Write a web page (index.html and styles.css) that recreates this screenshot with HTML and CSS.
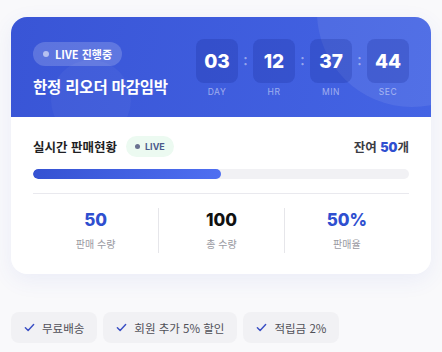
FILE: index.html
```html
<!DOCTYPE html>
<html lang="ko">
<head>
    <meta charset="UTF-8">
    <meta name="viewport" content="width=device-width, initial-scale=1.0">
    <title>한정 리오더</title>
    <link rel="stylesheet" href="styles.css">
</head>
<body>
    <div class="page">
        <div class="card">
            <div class="hero">
                <span class="blob blob-big"></span>
                <span class="blob blob-small"></span>
                <div class="hero-left">
                    <span class="live-pill"><i class="dot"></i>LIVE 진행중</span>
                    <h1>한정 리오더 마감임박</h1>
                </div>
                <div class="countdown">
                    <div class="unit">
                        <div class="box">03</div>
                        <span class="label">DAY</span>
                    </div>
                    <span class="colon">:</span>
                    <div class="unit">
                        <div class="box">12</div>
                        <span class="label">HR</span>
                    </div>
                    <span class="colon">:</span>
                    <div class="unit">
                        <div class="box">37</div>
                        <span class="label">MIN</span>
                    </div>
                    <span class="colon">:</span>
                    <div class="unit">
                        <div class="box">44</div>
                        <span class="label">SEC</span>
                    </div>
                </div>
            </div>

            <div class="content">
                <div class="status-row">
                    <div class="status-title">
                        <h2>실시간 판매현황</h2>
                        <span class="live-tag"><i class="dot"></i>LIVE</span>
                    </div>
                    <p class="remain">잔여 <strong>50</strong>개</p>
                </div>

                <div class="progress">
                    <div class="progress-fill" style="width: 50%"></div>
                </div>

                <div class="stats">
                    <div class="stat">
                        <strong class="accent">50</strong>
                        <span>판매 수량</span>
                    </div>
                    <div class="stat">
                        <strong>100</strong>
                        <span>총 수량</span>
                    </div>
                    <div class="stat">
                        <strong class="accent">50%</strong>
                        <span>판매율</span>
                    </div>
                </div>
            </div>
        </div>

        <div class="perks">
            <span class="perk"><svg viewBox="0 0 12 12"><path d="M1.5 6.3 L4.5 9.2 L10.5 2.8"/></svg>무료배송</span>
            <span class="perk"><svg viewBox="0 0 12 12"><path d="M1.5 6.3 L4.5 9.2 L10.5 2.8"/></svg>회원 추가 5% 할인</span>
            <span class="perk"><svg viewBox="0 0 12 12"><path d="M1.5 6.3 L4.5 9.2 L10.5 2.8"/></svg>적립금 2%</span>
        </div>
    </div>
</body>
</html>
```

FILE: styles.css
```css
* {
    margin: 0;
    padding: 0;
    box-sizing: border-box;
}

body {
    font-family: 'Noto Sans CJK KR', 'Noto Sans', sans-serif;
    background: #f9f9fb;
    color: #222;
}

.page {
    padding: 17px 11px;
}

.card {
    width: 420px;
    background: #fff;
    border-radius: 16px;
    overflow: hidden;
    box-shadow: 0 6px 22px rgba(70, 90, 200, 0.08);
}

/* header */
.hero {
    position: relative;
    overflow: hidden;
    height: 100px;
    padding: 0 22px;
    display: flex;
    align-items: center;
    justify-content: space-between;
    background: linear-gradient(100deg, #3955d6 0%, #4464e4 100%);
    color: #fff;
}

.blob {
    position: absolute;
    border-radius: 50%;
    background: rgba(255, 255, 255, 0.08);
}

.blob-big {
    width: 190px;
    height: 190px;
    top: -100px;
    right: -76px;
}

.blob-small {
    width: 80px;
    height: 80px;
    left: 40px;
    top: 43px;
    background: rgba(255, 255, 255, 0.04);
}

.hero-left {
    position: relative;
    display: flex;
    flex-direction: column;
    align-items: flex-start;
    gap: 9px;
    padding-top: 5px;
}

.live-pill {
    display: inline-flex;
    align-items: center;
    gap: 6px;
    height: 24px;
    padding: 0 10px;
    border-radius: 12px;
    background: rgba(255, 255, 255, 0.18);
    font-size: 11px;
    font-weight: 700;
}

.live-pill .dot {
    width: 6px;
    height: 6px;
    border-radius: 50%;
    background: rgba(255, 255, 255, 0.55);
}

h1 {
    font-size: 15.5px;
    font-weight: 700;
    letter-spacing: -0.2px;
}

.countdown {
    position: relative;
    display: flex;
    align-items: flex-start;
    gap: 4px;
    padding-top: 2px;
}

.unit {
    display: flex;
    flex-direction: column;
    align-items: center;
    gap: 4px;
}

.box {
    width: 42px;
    height: 44px;
    border-radius: 8px;
    background: rgba(20, 35, 140, 0.22);
    display: flex;
    align-items: center;
    justify-content: center;
    font-family: 'Inter', sans-serif;
    font-size: 19px;
    font-weight: 800;
}

.label {
    font-family: 'Inter', sans-serif;
    font-size: 8.5px;
    letter-spacing: 0.6px;
    color: rgba(255, 255, 255, 0.5);
}

.colon {
    width: 7px;
    line-height: 44px;
    text-align: center;
    font-size: 12px;
    font-weight: 700;
    color: rgba(255, 255, 255, 0.45);
}

/* body */
.content {
    padding: 19px 22px 21px;
}

.status-row {
    display: flex;
    align-items: center;
    justify-content: space-between;
}

.status-title {
    display: flex;
    align-items: center;
    gap: 9px;
}

h2 {
    font-size: 12.5px;
    font-weight: 700;
    color: #1f1f24;
}

.live-tag {
    display: inline-flex;
    align-items: center;
    gap: 5px;
    height: 21px;
    padding: 0 9px;
    border-radius: 11px;
    background: #ecfaf1;
    font-family: 'Inter', sans-serif;
    font-size: 9px;
    font-weight: 700;
    color: #4c5a8c;
}

.live-tag .dot {
    width: 5px;
    height: 5px;
    border-radius: 50%;
    background: #6a7190;
}

.remain {
    font-size: 12.5px;
    font-weight: 700;
    color: #3c3c44;
}

.remain strong {
    font-family: 'Inter', sans-serif;
    color: #2f4fd0;
}

.progress {
    margin-top: 12px;
    height: 10px;
    border-radius: 5px;
    background: #f1f1f4;
    overflow: hidden;
}

.progress-fill {
    height: 100%;
    border-radius: 5px;
    background: linear-gradient(90deg, #3552d2, #4f6ff1);
}

.stats {
    margin-top: 14px;
    padding-top: 14px;
    border-top: 1px solid #e9e9ee;
    display: grid;
    grid-template-columns: repeat(3, 1fr);
}

.stat {
    display: flex;
    flex-direction: column;
    align-items: center;
    gap: 5px;
    border-left: 1px solid #e6e6ea;
    padding: 1px 0 2px;
}

.stat:first-child {
    border-left: none;
}

.stat strong {
    font-family: 'Inter', sans-serif;
    font-size: 17px;
    font-weight: 800;
    color: #111;
    line-height: 22px;
}

.stat strong.accent {
    color: #2f4fd0;
}

.stat span {
    font-size: 10px;
    color: #9a9aa2;
}

/* perks */
.perks {
    margin-top: 38px;
    display: flex;
    gap: 6px;
}

.perk {
    display: inline-flex;
    align-items: center;
    gap: 7px;
    height: 31px;
    padding: 0 13px;
    border-radius: 8px;
    background: #f1f1f4;
    font-size: 11.5px;
    color: #505058;
}

.perk svg {
    width: 11px;
    height: 11px;
    fill: none;
    stroke: #3a4fc4;
    stroke-width: 1.6;
    stroke-linecap: round;
    stroke-linejoin: round;
}
```
